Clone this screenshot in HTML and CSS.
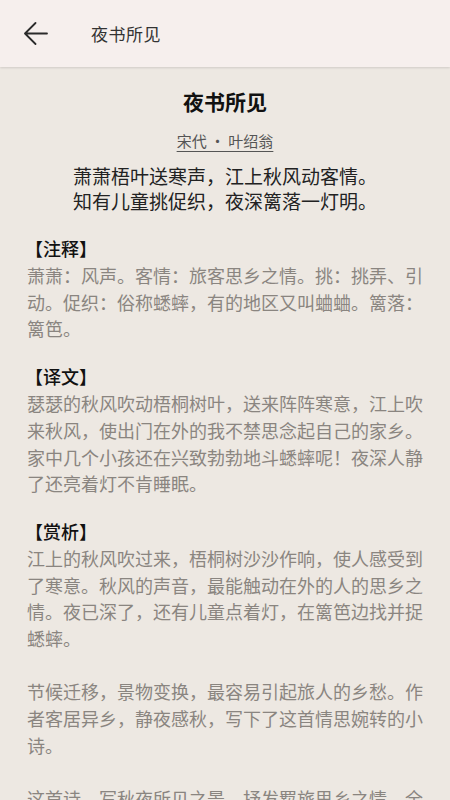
FILE: index.html
```html
<!DOCTYPE html>
<html lang="zh-CN">
<head>
<meta charset="utf-8">
<title>夜书所见</title>
<link rel="stylesheet" href="styles.css">
</head>
<body>
<header class="topbar">
  <svg class="back" width="24" height="24" viewBox="0 0 24 24" aria-hidden="true">
    <path d="M23 11.5H1.5M11.5 1L1 11.5L11.5 22" fill="none" stroke="#2b2b2b" stroke-width="1.8" stroke-linecap="round" stroke-linejoin="round"/>
  </svg>
  <span class="topbar-title">夜书所见</span>
</header>
<main class="content">
  <h1 class="title">夜书所见</h1>
  <div class="author"><span class="author-link">宋代 · 叶绍翁</span></div>
  <div class="poem">
    <div>萧萧梧叶送寒声，江上秋风动客情。</div>
    <div>知有儿童挑促织，夜深篱落一灯明。</div>
  </div>
  <section class="sec">
    <h2 class="sec-head">【注释】</h2>
    <p class="text">萧萧：风声。客情：旅客思乡之情。挑：挑弄、引动。促织：俗称蟋蟀，有的地区又叫蛐蛐。篱落：篱笆。</p>
  </section>
  <section class="sec">
    <h2 class="sec-head">【译文】</h2>
    <p class="text">瑟瑟的秋风吹动梧桐树叶，送来阵阵寒意，江上吹来秋风，使出门在外的我不禁思念起自己的家乡。家中几个小孩还在兴致勃勃地斗蟋蟀呢！夜深人静了还亮着灯不肯睡眠。</p>
  </section>
  <section class="sec">
    <h2 class="sec-head">【赏析】</h2>
    <p class="text">江上的秋风吹过来，梧桐树沙沙作响，使人感受到了寒意。秋风的声音，最能触动在外的人的思乡之情。夜已深了，还有儿童点着灯，在篱笆边找并捉蟋蟀。</p>
    <p class="text">节候迁移，景物变换，最容易引起旅人的乡愁。作者客居异乡，静夜感秋，写下了这首情思婉转的小诗。</p>
    <p class="text">这首诗，写秋夜所见之景，抒发羁旅思乡之情。全诗寓情于景，以景衬情，意境深远。</p>
  </section>
</main>
</body>
</html>
```

FILE: styles.css
```css
html, body {
  margin: 0;
  padding: 0;
}
body {
  width: 450px;
  height: 800px;
  overflow: hidden;
  background: #ede8e2;
  font-family: "Noto Sans CJK SC", "Noto Sans", sans-serif;
  color: #222;
}
.topbar {
  height: 67px;
  background: #f6efed;
  display: flex;
  align-items: center;
  box-shadow: 0 1px 2px rgba(0,0,0,0.12);
  position: relative;
  z-index: 1;
}
.back {
  margin-left: 24px;
  margin-top: 1px;
  flex: none;
}
.topbar-title {
  margin-left: 43px;
  font-size: 17px;
  color: #333;
  letter-spacing: 0.5px;
}
.content {
  padding: 19px 27px 0;
}
.title {
  margin: 0;
  font-size: 21px;
  line-height: 30px;
  font-weight: 700;
  text-align: center;
  color: #111;
}
.author {
  margin-top: 14px;
  text-align: center;
  font-size: 15px;
  line-height: 22px;
  color: #555;
}
.author-link {
  text-decoration: underline;
  text-underline-offset: 4px;
  text-decoration-thickness: 1px;
}
.poem {
  margin-top: 11px;
  text-align: center;
  font-size: 19px;
  line-height: 25px;
  color: #222;
}
.sec {
  margin-top: 21px;
}
.sec + .sec {
  margin-top: 20px;
}
.sec-head {
  margin: 0 0 0 -2px;
  font-size: 18px;
  line-height: 28px;
  font-weight: 500;
  color: #111;
}
.text {
  margin: 0;
  width: 396px;
  font-size: 18px;
  line-height: 26.7px;
  color: #8a8580;
  text-align: justify;
}
.text + .text {
  margin-top: 26.7px;
}
```
